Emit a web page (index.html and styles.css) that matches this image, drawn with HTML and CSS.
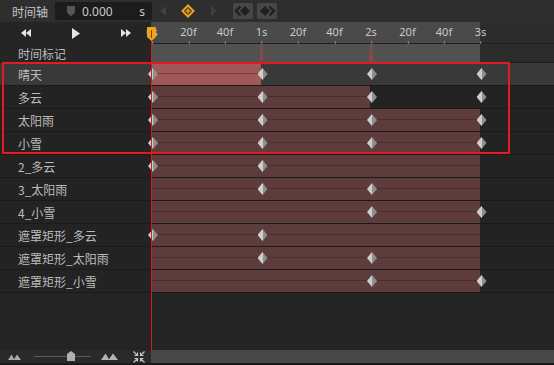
FILE: index.html
```html
<!DOCTYPE html>
<html lang="zh">
<head>
    <meta charset="UTF-8">
    <title>时间轴</title>
    <link rel="stylesheet" href="styles.css">
</head>
<body>
<div class="app">
    <!-- 顶部工具栏 -->
    <div class="toolbar">
        <span class="title">时间轴</span>
        <div class="time-input">
            <svg class="shield" width="8" height="11" viewBox="0 0 8 11"><path d="M0 0H8V6.5L4 10.5L0 6.5Z" fill="#565656"/></svg>
            <span class="time-value">0.000</span>
            <span class="unit">s</span>
        </div>
        <svg class="nav-arrow" width="7" height="10" viewBox="0 0 7 10"><path d="M6 0L0 5L6 10Z" fill="#404040"/></svg>
        <svg class="add-key" width="14" height="14" viewBox="0 0 14 14">
            <path d="M7 1.5L12.5 7L7 12.5L1.5 7Z" fill="none" stroke="#f2a31b" stroke-width="2"/>
            <path d="M7 4.6V9.4M4.6 7H9.4" stroke="#f2a31b" stroke-width="1.6"/>
        </svg>
        <svg class="nav-arrow" width="7" height="10" viewBox="0 0 7 10"><path d="M1 0L7 5L1 10Z" fill="#404040"/></svg>
        <button class="key-btn">
            <svg width="20" height="14" viewBox="0 0 20 14">
                <path d="M7.5 2.5L3 7L7.5 11.5" fill="none" stroke="#202020" stroke-width="2.4"/>
                <path d="M12 2L17 7L12 12L7 7Z" fill="#202020"/>
            </svg>
        </button>
        <button class="key-btn">
            <svg width="20" height="14" viewBox="0 0 20 14">
                <path d="M8 2L13 7L8 12L3 7Z" fill="#202020"/>
                <path d="M12.5 2.5L17 7L12.5 11.5" fill="none" stroke="#202020" stroke-width="2.4"/>
            </svg>
        </button>
    </div>

    <!-- 标尺 -->
    <div class="row header">
        <div class="transport">
            <svg width="10" height="8" viewBox="0 0 10 8"><path d="M5 0L0 4L5 8ZM10 0L5 4L10 8Z" fill="#e6e6e6"/></svg>
            <svg width="8" height="11" viewBox="0 0 8 11"><path d="M0 0L8 5.5L0 11Z" fill="#e6e6e6"/></svg>
            <svg width="10" height="8" viewBox="0 0 10 8"><path d="M0 0L5 4L0 8ZM5 0L10 4L5 8Z" fill="#e6e6e6"/></svg>
        </div>
        <div class="ruler">
            <span class="mark" style="--f:0">0s</span>
            <span class="mark" style="--f:20">20f</span>
            <span class="mark" style="--f:40">40f</span>
            <span class="mark" style="--f:60">1s</span>
            <span class="mark" style="--f:80">20f</span>
            <span class="mark" style="--f:100">40f</span>
            <span class="mark" style="--f:120">2s</span>
            <span class="mark" style="--f:140">20f</span>
            <span class="mark" style="--f:160">40f</span>
            <span class="mark" style="--f:180">3s</span>
        </div>
    </div>

    <div class="row markers">
        <div class="name">时间标记</div>
        <div class="lane">
            <i class="flag" style="--f:60"></i>
            <i class="flag" style="--f:120"></i>
        </div>
    </div>

    <!-- 轨道 -->
    <div class="row track sel">
        <div class="name">晴天</div>
        <div class="lane">
            <div class="span on" style="--f:60"></div>
            <i class="key at0"></i><i class="key at1"></i><i class="key at2"></i><i class="key at3"></i>
        </div>
    </div>
    <div class="row track">
        <div class="name">多云</div>
        <div class="lane">
            <div class="span" style="--f:120"></div>
            <i class="key at0"></i><i class="key at1"></i><i class="key at2"></i><i class="key at3"></i>
        </div>
    </div>
    <div class="row track">
        <div class="name">太阳雨</div>
        <div class="lane">
            <div class="span" style="--f:180"></div>
            <i class="key at0"></i><i class="key at1"></i><i class="key at2"></i><i class="key at3"></i>
        </div>
    </div>
    <div class="row track">
        <div class="name">小雪</div>
        <div class="lane">
            <div class="span" style="--f:180"></div>
            <i class="key at0"></i><i class="key at1"></i><i class="key at2"></i><i class="key at3"></i>
        </div>
    </div>
    <div class="row track">
        <div class="name">2_多云</div>
        <div class="lane">
            <div class="span" style="--f:180"></div>
            <i class="key at0"></i><i class="key at1"></i>
        </div>
    </div>
    <div class="row track">
        <div class="name">3_太阳雨</div>
        <div class="lane">
            <div class="span" style="--f:180"></div>
            <i class="key at1"></i><i class="key at2"></i>
        </div>
    </div>
    <div class="row track">
        <div class="name">4_小雪</div>
        <div class="lane">
            <div class="span" style="--f:180"></div>
            <i class="key at2"></i><i class="key at3"></i>
        </div>
    </div>
    <div class="row track">
        <div class="name">遮罩矩形_多云</div>
        <div class="lane">
            <div class="span" style="--f:180"></div>
            <i class="key at0"></i><i class="key at1"></i>
        </div>
    </div>
    <div class="row track">
        <div class="name">遮罩矩形_太阳雨</div>
        <div class="lane">
            <div class="span" style="--f:180"></div>
            <i class="key at1"></i><i class="key at2"></i>
        </div>
    </div>
    <div class="row track">
        <div class="name">遮罩矩形_小雪</div>
        <div class="lane">
            <div class="span" style="--f:180"></div>
            <i class="key at2"></i><i class="key at3"></i>
        </div>
    </div>

    <div class="filler"></div>

    <!-- 底部缩放栏 -->
    <div class="row bottombar">
        <div class="zoom-tools">
            <svg width="13" height="6" viewBox="0 0 13 6"><path d="M0 6L3.5 0.5L6.5 6ZM5.5 6L9 0.5L13 6Z" fill="#a8a8a8"/></svg>
            <div class="slider"><i class="thumb"></i></div>
            <svg width="17" height="7" viewBox="0 0 17 7"><path d="M0 7L4.5 0.5L8.5 7ZM7.5 7L12 0.5L17 7Z" fill="#b4b4b4"/></svg>
            <svg width="12" height="12" viewBox="0 0 12 12">
                <path d="M0.5 0.5L4.5 4.5M4.5 1.5V4.5H1.5M11.5 0.5L7.5 4.5M7.5 1.5V4.5H10.5M0.5 11.5L4.5 7.5M4.5 10.5V7.5H1.5M11.5 11.5L7.5 7.5M7.5 10.5V7.5H10.5" fill="none" stroke="#c4c4c4" stroke-width="1.2"/>
            </svg>
        </div>
        <div class="hscroll"></div>
    </div>
    <div class="bottom-edge"></div>

    <!-- 播放头与选择框 -->
    <div class="playhead">
        <svg class="head" width="9" height="14" viewBox="0 0 9 14">
            <path d="M1 0H8Q9 0 9 1V10L4.5 14L0 10V1Q0 0 1 0Z" fill="#f2a31b"/>
            <path d="M4.5 3V11" stroke="#6b4a10" stroke-width="1"/>
        </svg>
    </div>
    <div class="selection"></div>
</div>
</body>
</html>
```

FILE: styles.css
```css
* {
    box-sizing: border-box;
}
body {
    margin: 0;
    background-color: #242424;
    font-family: "Noto Sans", "Noto Sans CJK SC", sans-serif;
    font-size: 12px;
    color: #bdbdbd;
}
.app {
    --sec: 109.5px;
    width: 554px;
    height: 365px;
    display: flex;
    flex-direction: column;
    position: relative;
    overflow: hidden;
}

/* toolbar */
.toolbar {
    height: 22px;
    flex: none;
    background-color: #2e2e2e;
    display: flex;
    align-items: center;
    padding-left: 12px;
}
.title {
    width: 43px;
    font-family: "Noto Sans CJK SC", sans-serif;
    color: #c4c4c4;
}
.time-input {
    width: 97px;
    height: 18px;
    background-color: #1c1c1c;
    border-radius: 2px;
    display: flex;
    align-items: center;
    padding: 0 7px 0 12px;
}
.shield {
    margin-right: 7px;
}
.time-value {
    flex: 1;
    color: #c8c8c8;
}
.unit {
    color: #c8c8c8;
}
.nav-arrow {
    margin-left: 8px;
}
.add-key {
    margin: 0 7px 0 14px;
}
.nav-arrow + .key-btn {
    margin-left: 16px;
}
.key-btn {
    width: 20px;
    height: 16px;
    margin-right: 4px;
    padding: 0;
    border: none;
    border-radius: 2px;
    background-color: #474747;
    display: flex;
    align-items: center;
    justify-content: center;
}

/* rows */
.row {
    display: grid;
    grid-template-columns: 151px 1fr;
    flex: none;
}
.header {
    height: 22px;
}
.transport {
    display: grid;
    grid-template-columns: repeat(3, 50px);
    justify-items: center;
    align-items: center;
    background-color: #252525;
    padding-left: 1px;
}
.ruler {
    position: relative;
    background: linear-gradient(90deg, #4a4a4a 329px, #2c2c2c 329px);
    border-bottom: 1px solid #1e1e1e;
}
.mark {
    position: absolute;
    top: 2px;
    left: calc(var(--f) * var(--sec) / 60 + 1px);
    transform: translateX(-50%);
    font-size: 11px;
    color: #c9c9c9;
}
.mark::after {
    content: "";
    position: absolute;
    left: 50%;
    top: 17px;
    width: 1px;
    height: 3px;
    background-color: #8a8a8a;
}

.name {
    padding-left: 18px;
    display: flex;
    align-items: center;
    font-family: "Noto Sans CJK SC", sans-serif;
    color: #bcbcbc;
}
.lane {
    position: relative;
}
.markers {
    height: 19px;
    border-bottom: 1px solid #1b1b1b;
}
.markers .name {
    background-color: #252525;
}
.markers .lane {
    background: linear-gradient(90deg, #525252 329px, #2c2c2c 329px);
}
.flag {
    position: absolute;
    top: 1px;
    left: calc(var(--f) * var(--sec) / 60 - 1px);
    width: 4px;
    height: 16px;
    background-color: #8a4848;
    clip-path: polygon(25% 0, 75% 0, 100% 100%, 0 100%);
}

.track {
    height: 23px;
    border-bottom: 1px solid #1a1a1a;
    background-color: #232323;
}
.track.sel {
    background-color: #393939;
}
.span {
    position: absolute;
    top: 0;
    bottom: 0;
    left: 1px;
    width: calc(var(--f) * var(--sec) / 60 - 1px);
    background: linear-gradient(#5e3c3c 10px, #4b2e2e 10px, #4b2e2e 11px, #5e3c3c 11px);
}
.span.on {
    background: linear-gradient(#a05858 10px, #723e3e 10px, #723e3e 11px, #a05858 11px);
}
.key {
    position: absolute;
    top: 5px;
    width: 10px;
    height: 12px;
    margin-left: -4px;
    background: linear-gradient(90deg, #cdcdcd 50%, #8e8e8e 50%);
    clip-path: polygon(50% 0, 100% 50%, 50% 100%, 0 50%);
}
.at0 { left: 1px; }
.at1 { left: calc(var(--sec) + 1px); }
.at2 { left: calc(var(--sec) * 2 + 1px); }
.at3 { left: calc(var(--sec) * 3 + 1px); }

.filler {
    flex: 1;
    background-color: #242424;
}

/* bottom bar */
.bottombar {
    height: 13px;
}
.zoom-tools {
    background-color: #2a2a2a;
    display: flex;
    align-items: center;
    padding-left: 8px;
}
.slider {
    position: relative;
    width: 57px;
    height: 1px;
    margin: 0 10px 0 13px;
    background-color: #5a5a5a;
}
.thumb {
    position: absolute;
    left: 33px;
    top: -5px;
    width: 8px;
    height: 10px;
    background-color: #b0b0b0;
    clip-path: polygon(50% 0, 100% 30%, 100% 100%, 0 100%, 0 30%);
}
.zoom-tools svg:last-child {
    margin-left: 15px;
}
.hscroll {
    background-color: #474747;
}
.bottom-edge {
    height: 2px;
    flex: none;
    background-color: #1a1a1a;
}

/* overlays */
.playhead {
    position: absolute;
    left: 151px;
    top: 40px;
    width: 1px;
    height: 310px;
    background-color: #d41c1c;
}
.head {
    position: absolute;
    left: -4px;
    top: -13px;
}
.selection {
    position: absolute;
    left: 2px;
    top: 62px;
    width: 508px;
    height: 92px;
    border: 2px solid #e21b23;
}
```
